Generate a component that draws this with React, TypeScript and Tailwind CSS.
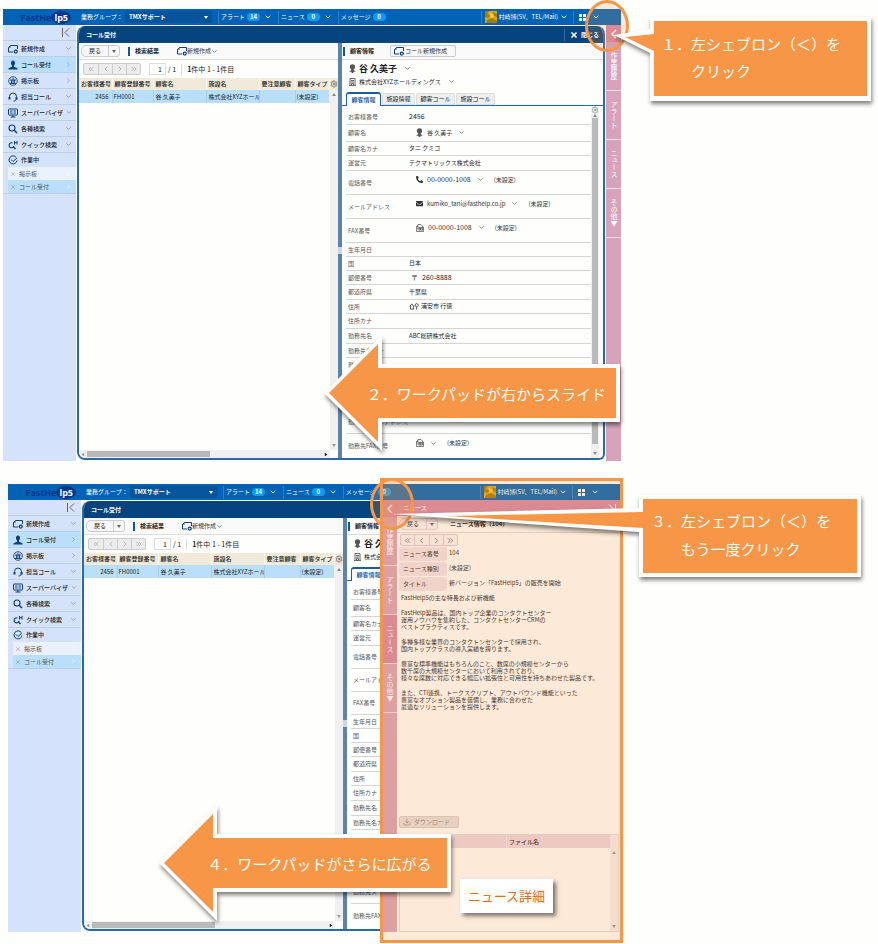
import type { ReactNode } from "react";
import { ChevronDown, ChevronLeft, ChevronRight, ChevronsLeft, ChevronsRight, Download, Settings, X } from "lucide-react";
import { FaEnvelope, FaPhoneAlt } from "react-icons/fa";

export default function App() {
  return (
    <main className="min-h-[944px] bg-[#fefefc] pt-[9px] font-['Noto_Sans_CJK_JP','Noto_Sans',sans-serif] text-[6px] leading-none text-[#222]">
      <section className="relative mr-[257px] ml-[3px]">
        <AppWindow id="first" />
        <Ring className="top-[-9px] right-[-8px]" />
        <CalloutOne />
        <ArrowLabel className="top-[328px] right-px" shaft={238} text="２．ワークパッドが右からスライド" />
      </section>

      <section className="relative mt-[23px] mr-[258px] ml-[8px]">
        <AppWindow id="second" compact>
          <WorkPad />
        </AppWindow>
        <div className="absolute top-[-6px] right-[-3px] bottom-[-11px] w-[243px] border-[3px] border-[#f79646] bg-[#f79646]/20" />
        <Ring className="top-[-6px] right-[206px]" />
        <CalloutThree />
        <div className="absolute right-[67px] bottom-[19px] bg-white px-[8px] py-[10px] text-[13px] leading-[14px] text-[#e46c0a] shadow-[3px_3px_4px_rgba(0,0,0,0.5)]">
          ニュース詳細
        </div>
        <ArrowLabel className="top-[323px] right-[169px]" shaft={234} text="４．ワークパッドがさらに広がる" />
      </section>
    </main>
  );
}

/* ---------- application window ---------- */

const FIELDS: { label: string; value?: ReactNode; size: "short" | "mid" | "name" | "tall" }[] = [
  { label: "お客様番号", value: <span className="text-[7px]">2456</span>, size: "mid" },
  { label: "顧客名", value: <Contact icon={<PersonIcon />} text="谷 久美子" />, size: "name" },
  { label: "顧客名カナ", value: "タニ クミコ", size: "short" },
  { label: "運営元", value: "テクマトリックス株式会社", size: "mid" },
  { label: "電話番号", value: <Contact icon={<FaPhoneAlt size={7} />} text="00-0000-1008" unset />, size: "tall" },
  { label: "メールアドレス", value: <Contact icon={<FaEnvelope size={7} />} text="kumiko_tani@fasthelp.co.jp" unset />, size: "tall" },
  { label: "FAX番号", value: <Contact icon={<FaxIcon />} text="00-0000-1008" unset />, size: "tall" },
  { label: "生年月日", size: "short" },
  { label: "国", value: "日本", size: "short" },
  { label: "郵便番号", value: <span className="flex gap-1 pl-[2px] text-[7px]"><span>〒</span>260-8888</span>, size: "short" },
  { label: "都道府県", value: "千葉県", size: "mid" },
  { label: "住所", value: <span className="flex items-center gap-[2px]"><HomePinIcon />浦安市 行徳</span>, size: "short" },
  { label: "住所カナ", size: "mid" },
  { label: "勤務先名", value: "ABC総研株式会社", size: "mid" },
  { label: "勤務先名カナ", size: "short" },
  { label: "勤務先部署", size: "short" },
  { label: "勤務先役職", size: "short" },
  { label: "勤務先電話番号", value: <Contact icon={<FaPhoneAlt size={7} />} unset />, size: "tall" },
  { label: "勤務先メールアドレス", value: <Contact icon={<FaEnvelope size={7} />} unset />, size: "tall" },
  { label: "勤務先FAX番号", value: <Contact icon={<FaxIcon />} unset />, size: "tall" },
];

const ROW_HEIGHT = { short: "h-[14px]", mid: "h-[15px]", name: "h-[17px]", tall: "h-[24px]" };

function AppWindow({ id, compact, children }: { id: string; compact?: boolean; children?: ReactNode }) {
  return (
    <div className="relative flex min-h-[448px] flex-col">
      <TopBar id={id} />
      <div className="flex flex-1">
        <Sidebar />
        <div className="ml-px flex min-w-0 flex-1 flex-col pt-px pb-px">
          <div className="flex flex-1 flex-col overflow-hidden rounded-lg rounded-br-[6px] border-x-2 border-b-2 border-[#2a6aa6] bg-[#fefefc]">
            <div className="flex h-[17px] shrink-0 items-center bg-[#05447e] pr-[4px] pl-[7px] font-bold text-white">
              <h2 className="flex-1">コール受付</h2>
              <button className="flex items-center gap-[3px] border-l border-[#3b6a99] py-[2px] pl-[5px]">
                <X size={8} strokeWidth={5} />
                閉じる
              </button>
            </div>
            <div className="flex flex-1">
              <ListPane id={id} />
              <div className="flex w-1 shrink-0 items-center bg-[#5c84ab]">
                <span className="h-[7px] w-full bg-[#c9d8e8]" />
              </div>
              <DetailPane compact={compact} />
            </div>
          </div>
        </div>
        <PadTabs className="ml-px" />
      </div>
      {children}
    </div>
  );
}

function TopBar({ id }: { id: string }) {
  return (
    <header className="flex h-4 items-center bg-[#0063b6] text-white">
      <div className="flex w-[73px] items-center justify-end pr-[5px] font-['Open_Sans',sans-serif] text-[9px] font-bold">
        <span className="text-[#06358f]">FastHe</span>
        <span className="rounded-[50%] bg-[#06358f] px-[3px] py-[2px] text-white">lp5</span>
      </div>
      <label htmlFor={`group-${id}`} className="ml-[5px] w-[44px] whitespace-nowrap">
        業務グループ：
      </label>
      <div className="relative w-[87px]">
        <select id={`group-${id}`} className="block h-[12px] w-full appearance-none bg-[#05549c] pl-[4px] font-bold">
          <option>TMXサポート</option>
        </select>
        <Triangle className="absolute top-[5px] right-[4px]" />
      </div>
      <div className="ml-[6px] flex h-[13px] items-center border-l border-[#2f7fc7] pl-[2px]">
        <Notice label="アラート" count={14} menu />
      </div>
      <div className="ml-[6px] flex h-[13px] items-center border-l border-[#2f7fc7] pl-[2px]">
        <Notice label="ニュース" count={0} menu />
      </div>
      <div className="ml-[6px] flex h-[13px] items-center border-l border-[#2f7fc7] pl-[2px]">
        <Notice label="メッセージ" count={0} />
      </div>
      <button className="ml-auto flex h-[13px] items-center gap-[2px] border-l border-[#2f7fc7] pl-[3px] whitespace-nowrap">
        <AvatarIcon />
        村崎博(SV、TEL/Mail)
        <ChevronDown size={8} strokeWidth={3} />
      </button>
      <button aria-label="メニュー" className="ml-[5px] flex h-[13px] items-center gap-[6px] border-l border-[#2f7fc7] pr-[21px] pl-[5px]">
        <span className="grid grid-cols-2 gap-px">
          <i className="h-[3px] w-[3px] bg-white" />
          <i className="h-[3px] w-[3px] bg-white" />
          <i className="h-[3px] w-[3px] bg-white" />
          <i className="h-[3px] w-[3px] bg-white" />
        </span>
        <ChevronDown size={8} strokeWidth={3} />
      </button>
    </header>
  );
}

function Notice({ label, count, menu }: { label: string; count: number; menu?: boolean }) {
  return (
    <button className="flex items-center gap-[2px] whitespace-nowrap">
      {label}
      <span className="w-[13px] rounded-full bg-[#0c9cf4] text-center leading-[8px] font-bold">{count}</span>
      {menu && <ChevronDown size={8} strokeWidth={3} className="ml-[2px]" />}
    </button>
  );
}

function Sidebar() {
  return (
    <nav className="w-[73px] shrink-0 bg-[#d4e3fb]">
      <div className="flex h-4 items-center justify-end border-b border-[#bccfe9] pr-[6px]">
        <svg viewBox="0 0 9 9" className="h-[9px] w-[9px]" fill="none" stroke="#667" strokeWidth="1">
          <path d="M1.5 0v9M8 0.5L4 4.5l4 4" />
        </svg>
      </div>
      <NavItem icon={<CreateIcon />} label="新規作成" down />
      <NavItem icon={<UserIcon />} label="コール受付" active />
      <NavItem icon={<BoardIcon />} label="掲示板" />
      <NavItem icon={<HeadsetIcon />} label="担当コール" down />
      <NavItem icon={<MonitorIcon />} label="スーパーバイザ" down />
      <NavItem icon={<SearchIcon />} label="各種検索" down />
      <NavItem icon={<QuickSearchIcon />} label="クイック検索" down />
      <div className="flex h-[14px] items-center gap-[3px] pl-[5px] text-[#0b3f7d]">
        <WorkingIcon />
        <span className="font-medium text-[#222]">作業中</span>
      </div>
      <div className="border-b border-[#bccfe9] pl-[5px] text-[#555]">
        <OpenItem label="掲示板" className="bg-[#e9f1fc]" />
        <OpenItem label="コール受付" className="bg-[#b9dffc]" />
      </div>
    </nav>
  );
}

function NavItem({ icon, label, down, active }: { icon: ReactNode; label: string; down?: boolean; active?: boolean }) {
  return (
    <a
      href="#"
      className={`flex h-4 items-center gap-[3px] border-b border-[#bccfe9] pr-[4px] pl-[5px] whitespace-nowrap text-[#0b3f7d] ${active ? "bg-[#b9dffc]" : ""}`}
    >
      {icon}
      <span className="flex-1 font-medium text-[#222]">{label}</span>
      {down ? <ChevronDown size={7} className="text-[#667]" /> : <ChevronRight size={7} className="text-[#889]" />}
    </a>
  );
}

function OpenItem({ label, className }: { label: string; className: string }) {
  return (
    <a href="#" className={`flex h-[13px] items-center gap-[3px] pr-[4px] pl-[2px] ${className}`}>
      <X size={6} className="text-[#889]" />
      <span className="flex-1">{label}</span>
      <ChevronRight size={7} className="text-white" />
    </a>
  );
}

function BackButton({ className }: { className: string }) {
  return (
    <div className={`flex h-[12px] items-center rounded-[3px] rounded-l-[5px] border ${className}`}>
      <button className="w-[26px]">戻る</button>
      <button aria-label="履歴" className="flex h-full w-[11px] items-center justify-center border-l border-inherit text-[#666]">
        <Triangle />
      </button>
    </div>
  );
}

function ListPane({ id }: { id: string }) {
  return (
    <div className="flex w-[259px] shrink-0 flex-col">
      <div className="flex h-[17px] items-center border-b border-[#ddd] bg-[#fafafa] pl-[2px]">
        <BackButton className="border-[#ccc] bg-[#f7f7f7]" />
        <span className="ml-[8px] h-[9px] w-[2px] bg-[#0b56a4]" />
        <h3 className="ml-[5px] w-[42px] font-bold">検索結果</h3>
        <button className="flex items-center text-[#0b3f7d]">
          <CreateIcon />
          <span className="text-[#333]">新規作成</span>
          <ChevronDown size={7} />
        </button>
      </div>
      <div className="flex h-[18px] items-center pl-[4px] text-[7px]">
        <div className="flex h-[12px] rounded-[2px] border border-[#ccc] bg-[#ececec] text-[#999]">
          <button aria-label="最初へ" className="w-[14px] pl-[3px]"><ChevronsLeft size={8} /></button>
          <button aria-label="前へ" className="w-[14px] border-l border-[#ccc] pl-[3px]"><ChevronLeft size={8} /></button>
          <button aria-label="次へ" className="w-[14px] border-l border-[#ccc] pl-[3px]"><ChevronRight size={8} /></button>
          <button aria-label="最後へ" className="w-[14px] border-l border-[#ccc] pl-[3px]"><ChevronsRight size={8} /></button>
        </div>
        <input
          aria-label="ページ"
          id={`page-${id}`}
          defaultValue="1"
          className="ml-[8px] h-[12px] w-[17px] border border-[#ddd] bg-white pr-[3px] text-right"
        />
        <span className="ml-[2px] border-r border-[#ddd] py-[2px] pr-[5px]">/ 1</span>
        <span className="ml-[5px]"><b>1</b>件中 1 - 1件目</span>
      </div>
      <table className="w-full table-fixed border-collapse text-left">
        <colgroup>
          <col className="w-[33px]" />
          <col className="w-[41px]" />
          <col className="w-[53px]" />
          <col className="w-[53px]" />
          <col className="w-[36px]" />
          <col className="w-[34px]" />
          <col className="w-[9px]" />
        </colgroup>
        <thead>
          <tr className="h-[12px] bg-[#f1eadb]">
            {["お客様番号", "顧客登録番号", "顧客名", "施設名", "要注意顧客", "顧客タイプ"].map((name) => (
              <th key={name} className="overflow-hidden border-r border-[#fbf8f0] p-0 pl-[2px] font-medium whitespace-nowrap">{name}</th>
            ))}
            <th className="p-0"><Settings size={8} className="text-[#555]" aria-label="設定" /></th>
          </tr>
        </thead>
        <tbody>
          <tr className="h-[13px] bg-[#b9dffc] whitespace-nowrap">
            <td className="border-r border-[#a5cdec] p-0 pr-[3px] text-right">2456</td>
            <td className="border-r border-[#a5cdec] p-0 pl-px">FH0001</td>
            <td className="border-r border-[#a5cdec] p-0 pl-[2px]">谷 久美子</td>
            <td className="overflow-hidden border-r border-[#a5cdec] p-0 pl-[2px]">株式会社XYZホールディングス</td>
            <td className="border-r border-[#a5cdec] p-0" />
            <td className="p-0 pl-px">(未設定)</td>
            <td className="bg-[#f0f0f0] p-0 align-top"><Triangle className="mx-auto mt-[3px] rotate-180 text-[#888]" /></td>
          </tr>
        </tbody>
      </table>
      <div className="flex flex-1 justify-end">
        <div className="flex w-[8px] items-end justify-center bg-[#f0f0f0] pb-[3px] text-[#999]"><Triangle /></div>
      </div>
      <div className="flex h-[8px] items-center bg-[#f0f0f0]">
        <Triangle className="mx-[2px] rotate-90 text-[#999]" />
        <span className="h-[6px] w-[123px] bg-[#b9b9b9]" />
        <Triangle className="mr-[2px] ml-auto -rotate-90" />
        <span className="h-full w-[8px] bg-[#fefefc]" />
      </div>
    </div>
  );
}

function DetailPane({ compact }: { compact?: boolean }) {
  return (
    <div className="flex min-w-0 flex-1 flex-col">
      <div className="flex h-[17px] items-center border-b border-[#ddd] bg-[#fafafa] pl-px">
        <span className="h-[9px] w-[2px] bg-[#0b56a4]" />
        <h3 className="ml-[5px] w-[40px] font-bold whitespace-nowrap">顧客情報</h3>
        <button className="flex h-[12px] w-[66px] shrink-0 items-center gap-px rounded-[2px] border border-[#ccc] bg-[#f8f8f8] pl-[3px] whitespace-nowrap text-[#0b3f7d]">
          <CreateIcon />
          <span className="text-[#333]">コール新規作成</span>
        </button>
      </div>
      <div className="flex h-[17px] items-center gap-[3px] pl-[7px] text-[9px] font-bold">
        <PersonIcon />
        谷 久美子
        <ChevronDown size={7} className="ml-[4px]" />
      </div>
      <div className="flex h-[9px] items-center gap-[3px] pl-[7px] whitespace-nowrap">
        <BuildingIcon />
        株式会社XYZホールディングス
        <ChevronDown size={7} className="ml-[4px]" />
      </div>
      <div role="tablist" className="mt-[5px] flex h-[15px] items-end gap-px border-b border-[#2a6aa6] pl-[4px] whitespace-nowrap">
        <button role="tab" className="mb-[-1px] h-[14px] w-[35px] rounded-t-[3px] border border-t-2 border-b-0 border-[#1c5c9c] bg-[#fefefc] font-medium text-[#0b56a4]">顧客情報</button>
        <button role="tab" className="h-[12px] w-[33px] rounded-t-[2px] border border-[#ddd] bg-[#eee]">施設情報</button>
        <button role="tab" className="h-[12px] w-[39px] rounded-t-[2px] border border-[#ddd] bg-[#eee]">顧客コール</button>
        <button role="tab" className="h-[12px] w-[39px] rounded-t-[2px] border border-[#ddd] bg-[#eee]">施設コール</button>
      </div>
      <div className="flex flex-1 pr-[4px] pl-[4px]">
        <dl className="min-w-0 flex-1 pt-[4px]">
          {FIELDS.map((field) => (
            <div
              key={field.label}
              className={`flex items-center border-b border-[#d4d4d4] pl-[2px] whitespace-nowrap last:border-b-0 ${field.size === "tall" && compact ? "h-[23px]" : ROW_HEIGHT[field.size]}`}
            >
              <dt className="w-[61px] shrink-0 text-[#555]">{field.label}</dt>
              <dd className={field.size === "tall" ? "pb-[6px]" : "pb-px"}>{field.value}</dd>
            </div>
          ))}
        </dl>
        <div className="flex w-[8px] flex-col items-center bg-[#f0f0f0] pb-[3px]">
          <Settings size={8} className="bg-[#fefefc] text-[#777]" />
          <Triangle className="rotate-180 text-[#888]" />
          <span className="mt-px mb-[8px] w-[6px] flex-1 bg-[#b9b9b9]" />
          <Triangle className="text-[#888]" />
        </div>
      </div>
    </div>
  );
}

function Contact({ icon, text, unset }: { icon: ReactNode; text?: string; unset?: boolean }) {
  const isNumber = text?.startsWith("00");
  return (
    <span className="flex items-center gap-[4px] pl-[7px] text-[#333]">
      {icon}
      {text && <span className={isNumber ? "text-[7px]" : ""}>{text}</span>}
      <ChevronDown size={7} className="ml-[2px]" />
      {unset && <span className="pl-[6px]">(未設定)</span>}
    </span>
  );
}

/* ---------- work pad ---------- */

function PadTabs({ active, className = "" }: { active?: string; className?: string }) {
  return (
    <div className={`flex w-[15px] shrink-0 flex-col bg-[#d6a3bb] text-white ${className}`}>
      <button aria-label="ワークパッドを開く" className="flex h-[17px] items-center justify-center bg-[#d487a7]">
        <svg viewBox="0 0 8 10" className="h-[10px] w-[8px]" fill="none" stroke="currentColor" strokeWidth="1.5">
          <path d="M6 1L2 5l4 4" />
        </svg>
      </button>
      {["作業履歴", "アラート", "ニュース", "その他▼"].map((name) => (
        <button
          key={name}
          className={`flex h-[49px] items-center justify-center border-b border-[#f3dde7] text-[7px] [writing-mode:vertical-rl] ${name === active ? "bg-[#d487a7]" : ""}`}
        >
          {name}
        </button>
      ))}
    </div>
  );
}

function WorkPad() {
  return (
    <aside className="absolute top-4 right-0 bottom-0 flex w-[238px] bg-[#fefefc]">
      <PadTabs active="ニュース" />
      <div className="flex min-w-0 flex-1 flex-col">
        <div className="flex h-4 items-center justify-between bg-[#d487a7] pr-[3px] pl-[6px] font-medium text-white">
          <h2>ニュース</h2>
          <svg viewBox="0 0 9 9" className="h-[9px] w-[9px]" fill="none" stroke="currentColor">
            <path d="M7.5 0v9M1 0.5l4 4-4 4" />
          </svg>
        </div>
        <div className="flex h-[17px] shrink-0 items-center border-b border-[#ddd] pl-[2px]">
          <BackButton className="border-[#e3cfd9] bg-[#fbf6f9]" />
          <h3 className="ml-[12px] font-bold">ニュース情報（104）</h3>
        </div>
        <div className="mt-px ml-[3px] flex h-[12px] w-[58px] rounded-[2px] border border-[#ddc9d3] bg-[#faf4f7] text-[#555]">
          <button aria-label="最初へ" className="flex-1 pl-[2px]"><ChevronsLeft size={9} /></button>
          <button aria-label="前へ" className="flex-1 border-l border-[#ddc9d3] pl-[2px]"><ChevronLeft size={9} /></button>
          <button aria-label="次へ" className="flex-1 border-l border-[#ddc9d3] pl-[2px]"><ChevronRight size={9} /></button>
          <button aria-label="最後へ" className="flex-1 border-l border-[#ddc9d3] pl-[2px]"><ChevronsRight size={9} /></button>
        </div>
        <dl className="flex flex-col gap-px pt-px pl-[2px]">
          <NewsField label="ニュース番号" value="104" />
          <NewsField label="ニュース種別" value="(未設定)" />
          <NewsField label="タイトル" value="新バージョン「FastHelp5」の販売を開始" />
        </dl>
        <div className="flex flex-1 flex-col gap-[8px] pt-[3px] pl-[4px] leading-[7px]">
          <p>FastHelp5の主な特長および新機能</p>
          <p>
            FastHelp製品は、国内トップ企業のコンタクトセンター<br />
            運用ノウハウを集約した、コンタクトセンターCRMの<br />
            ベストプラクティスです。
          </p>
          <p>
            多種多様な業界のコンタクトンセンターで採用され、<br />
            国内トップクラスの導入実績を誇ります。
          </p>
          <p>
            豊富な標準機能はもちろんのこと、数席の小規模センターから<br />
            数千席の大規模センターにおいて利用されており、<br />
            様々な席数に対応できる幅広い拡張性と可用性を持ちあわせた製品です。
          </p>
          <p>
            また、CTI連携、トークスクリプト、アウトバウンド機能といった<br />
            豊富なオプション製品を装備し、業務に合わせた<br />
            最適なソリューションを提供します。
          </p>
        </div>
        <button className="mb-[6px] ml-[2px] flex h-[12px] w-[60px] items-center gap-[3px] rounded-[2px] border border-[#d5ccd0] bg-[#e4e0dc] pl-[3px] text-[#888]">
          <Download size={8} />
          ダウンロード
        </button>
        <div className="mr-px ml-[2px] flex h-[98px] flex-col border border-[#ddd]">
          <div className="flex h-[13px] items-center bg-[#ead7e2]">
            <span className="h-full w-[107px] border-r border-[#f4eaf0]" />
            <span className="flex-1 pl-[2px] font-medium">ファイル名</span>
            <span className="h-full w-[8px] border-l border-[#f4eaf0] bg-[#f7eef3]" />
          </div>
          <div className="flex w-[8px] flex-1 flex-col items-center justify-between self-end bg-[#f3f0f2] py-[3px] text-[#999]">
            <Triangle className="rotate-180" />
            <Triangle />
          </div>
        </div>
      </div>
    </aside>
  );
}

function NewsField({ label, value }: { label: string; value: string }) {
  return (
    <div className="flex whitespace-nowrap">
      <dt className="flex h-[14px] w-[48px] items-center rounded-[2px] bg-[#f2e3ea] pl-[4px]">{label}</dt>
      <dd className="pt-[3px] pl-[2px]">{value}</dd>
    </div>
  );
}

/* ---------- annotations ---------- */

function Ring({ className }: { className: string }) {
  return <div className={`absolute h-[52px] w-[44px] rounded-[50%] border-[3px] border-[#f79646] bg-[#f79646]/20 ${className}`} />;
}

function CalloutOne() {
  return (
    <div className="absolute top-[8px] right-[-250px] h-[88px] w-[257px] text-[15px] leading-[27px] text-white">
      <svg viewBox="0 0 257 88" className="absolute inset-0 overflow-visible drop-shadow-[1px_3px_2px_rgba(0,0,0,0.5)]">
        <path d="M0 18L36 12V0H257V84H36V36Z" fill="#fff" />
        <path d="M11 20L40 17V4H253V79H40V34Z" fill="#f79646" />
      </svg>
      <p className="relative pt-[13px] pl-[47px] whitespace-nowrap">
        １．左シェブロン（＜）を<br />
        <span className="pl-[30px]">クリック</span>
      </p>
    </div>
  );
}

function CalloutThree() {
  return (
    <div className="absolute top-[11px] right-[-241px] h-[82px] w-[470px] text-[15px] leading-[28px] text-white">
      <svg viewBox="0 0 470 82" className="absolute inset-0 overflow-visible drop-shadow-[1px_3px_2px_rgba(0,0,0,0.5)]">
        <path d="M0 19L248 13V0H470V82H248V37Z" fill="#fff" />
        <path d="M56 21L252 17V4H466V78H252V33Z" fill="#f79646" />
      </svg>
      <p className="relative pt-[12px] pl-[260px] whitespace-nowrap">
        ３．左シェブロン（＜）を<br />
        <span className="pl-[30px]">もう一度クリック</span>
      </p>
    </div>
  );
}

function ArrowLabel({ className, shaft, text }: { className: string; shaft: number; text: string }) {
  const right = 54 + shaft;
  return (
    <div className={`absolute flex h-[112px] items-center text-[15px] text-white ${className}`} style={{ width: right + 4 }}>
      <svg viewBox={`0 0 ${right + 4} 112`} className="absolute inset-0 overflow-visible drop-shadow-[1px_3px_2px_rgba(0,0,0,0.5)]">
        <path d={`M0 56L58 -2V27H${right + 4}V85H58V114Z`} fill="#fff" />
        <path d={`M5 56L54 7V31H${right}V81H54V105Z`} fill="#f79646" />
      </svg>
      <p className="relative w-full pl-[29px] text-center whitespace-nowrap">{text}</p>
    </div>
  );
}

/* ---------- icons ---------- */

function Triangle({ className = "" }: { className?: string }) {
  return (
    <svg viewBox="0 0 4 3" className={`h-[3px] w-[4px] shrink-0 ${className}`} fill="currentColor">
      <path d="M0 0h4L2 3z" />
    </svg>
  );
}

function CreateIcon() {
  return (
    <svg viewBox="0 0 20 20" className="h-[10px] w-[10px] shrink-0" fill="none" stroke="currentColor" strokeWidth="2">
      <path d="M10 16H1V7l4-4h14v7" />
      <path d="M1 7h4V3" strokeWidth="1" />
      <circle cx="15.5" cy="15" r="3" strokeWidth="2.5" />
    </svg>
  );
}

function UserIcon() {
  return (
    <svg viewBox="0 0 20 20" className="h-[10px] w-[10px] shrink-0" fill="currentColor">
      <path d="M10 1c2.500 0 4 2 4 5 0 2-1 4-2 5v2.500l7 3V19H1v-2.500l7-3V11C7 10 6 8 6 6c0-3 1.500-5 4-5z" />
    </svg>
  );
}

function BoardIcon() {
  return (
    <svg viewBox="0 0 20 20" className="h-[10px] w-[10px] shrink-0" fill="none" stroke="currentColor" strokeWidth="1.8">
      <circle cx="10" cy="10" r="8.5" />
      <path d="M4 8h12M7 15V8M10 15V4M13 15V8M4 15h12" />
    </svg>
  );
}

function HeadsetIcon() {
  return (
    <svg viewBox="0 0 20 20" className="h-[10px] w-[10px] shrink-0" fill="none" stroke="currentColor" strokeWidth="2">
      <path d="M3 12V9a7 7 0 0 1 14 0v3c0 4-2 6-6 6" />
      <path d="M3 10v5M17 10v5" strokeWidth="4" />
    </svg>
  );
}

function MonitorIcon() {
  return (
    <svg viewBox="0 0 20 20" className="h-[10px] w-[10px] shrink-0" fill="none" stroke="currentColor" strokeWidth="2">
      <rect x="1" y="2" width="18" height="12" rx="1" />
      <path d="M4 6h5M4 10h5M11 6h5M11 10h5" />
      <path d="M5 18h10M10 14v4" />
    </svg>
  );
}

function SearchIcon() {
  return (
    <svg viewBox="0 0 20 20" className="h-[10px] w-[10px] shrink-0" fill="none" stroke="currentColor">
      <circle cx="8" cy="8" r="6" strokeWidth="2.2" />
      <path d="M12.5 12.5L18 18" strokeWidth="3" />
    </svg>
  );
}

function QuickSearchIcon() {
  return (
    <svg viewBox="0 0 20 20" className="h-[10px] w-[10px] shrink-0" fill="none" stroke="currentColor">
      <path d="M9 6a5 5 0 1 0 3 6" strokeWidth="2.2" />
      <path d="M11 14l4 4" strokeWidth="3" />
      <path d="M13 2v7M18 2v7M13 5.5h5" strokeWidth="2" />
    </svg>
  );
}

function WorkingIcon() {
  return (
    <svg viewBox="0 0 20 20" className="h-[10px] w-[10px] shrink-0" fill="none" stroke="currentColor" strokeWidth="2">
      <path d="M16.5 5A8 8 0 1 0 18 11" />
      <path d="M6 9l4 4 8-7" />
    </svg>
  );
}

function PersonIcon() {
  return (
    <svg viewBox="0 0 16 20" className="h-[9px] w-[7px] shrink-0" fill="#555">
      <circle cx="8" cy="6" r="6" />
      <path d="M5 11h6v3l4 2v1l-5 1v2H6v-2l-5-1v-1l4-2z" />
    </svg>
  );
}

function BuildingIcon() {
  return (
    <svg viewBox="0 0 14 16" className="h-[8px] w-[7px] shrink-0" fill="none" stroke="#666" strokeWidth="2">
      <path d="M2 15V1h10v14M0 15h14M4 5h6M4 8h6M5 15v-4h4v4" />
    </svg>
  );
}

function FaxIcon() {
  return (
    <svg viewBox="0 0 16 16" className="h-[8px] w-[8px] shrink-0" fill="none" stroke="#555" strokeWidth="1.5">
      <path d="M4 5H1v10h14V6h-2M4 12V1h6l3 3v2M1 5l3-2" />
      <rect x="6" y="7" width="7" height="5" />
      <path d="M9 7v5M6 9.500h7" />
    </svg>
  );
}

function HomePinIcon() {
  return (
    <svg viewBox="0 0 22 16" className="h-[7px] w-[10px] shrink-0" fill="none" stroke="#444" strokeWidth="2">
      <path d="M1 8l5-6 5 6M3 7v7h7V7" />
      <circle cx="17" cy="5" r="3.5" />
      <path d="M17 9v6" />
    </svg>
  );
}

function AvatarIcon() {
  return (
    <svg viewBox="0 0 12 12" className="h-[12px] w-[12px] shrink-0">
      <rect width="12" height="12" fill="#d9a90f" />
      <path d="M0 0h4l-2 3 4 1-3 3-3-1zM8 1l4 2v3L9 5zM2 9l5-2 5 3v2H1z" fill="#a87a08" />
      <path d="M4 2l4 1 1 3-3 1z" fill="#f2cf3a" />
    </svg>
  );
}
